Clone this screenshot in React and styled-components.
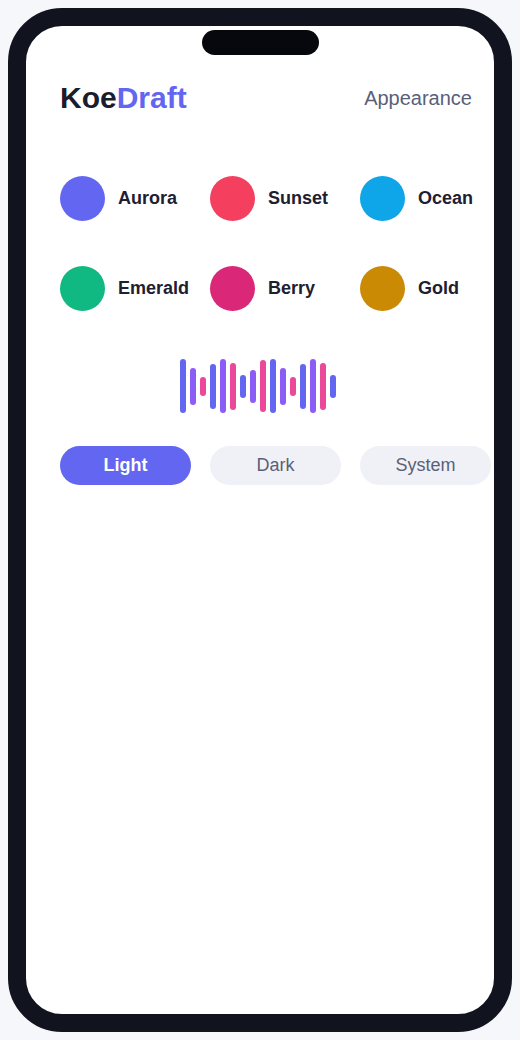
import styled, { createGlobalStyle } from "styled-components";

const GlobalStyle = createGlobalStyle`
  html, body {
    margin: 0;
    padding: 0;
    background: #f6f7fb;
    font-family: "Liberation Sans", Arial, sans-serif;
  }
`;

const Page = styled.div`
  padding: 8px;
`;

const Phone = styled.div`
  position: relative;
  width: 468px;
  height: 988px;
  border: 18px solid #11131f;
  border-radius: 54px;
  background: #ffffff;
  overflow: hidden;
`;

const Notch = styled.div`
  position: absolute;
  top: 4px;
  left: 176px;
  width: 117px;
  height: 25px;
  border-radius: 13px;
  background: #07080d;
`;

const Screen = styled.div`
  padding: 57px 22px 0 34px;
  display: flex;
  flex-direction: column;
`;

const Header = styled.header`
  display: flex;
  align-items: center;
  justify-content: space-between;
  height: 30px;
`;

const Logo = styled.h1`
  margin: 0;
  font-size: 30px;
  line-height: 1;
  font-weight: 700;
  color: #1b1c2c;

  span {
    color: #6366f1;
  }
`;

const Title = styled.span`
  font-size: 20px;
  line-height: 1;
  color: #5b5f79;
`;

const Grid = styled.div`
  display: grid;
  grid-template-columns: repeat(3, 131px);
  column-gap: 19px;
  row-gap: 45px;
  margin-top: 63px;
`;

const Swatch = styled.div`
  display: flex;
  align-items: center;
  gap: 13px;
  height: 45px;
`;

const Dot = styled.div`
  flex: none;
  width: 45px;
  height: 45px;
  border-radius: 50%;
  background: ${(p) => p.color};
`;

const Label = styled.span`
  font-size: 18px;
  font-weight: 700;
  color: #1e2031;
  white-space: nowrap;
`;

const Wave = styled.div`
  width: 396px;
  height: 54px;
  margin-top: 48px;
  display: flex;
  align-items: center;
  justify-content: center;
  gap: 4px;
`;

const Bar = styled.div`
  width: 6px;
  border-radius: 3px;
  background: ${(p) => p.color};
`;

const Modes = styled.div`
  display: grid;
  grid-template-columns: repeat(3, 131px);
  column-gap: 19px;
  margin-top: 33px;
`;

const ModeButton = styled.button`
  height: 39px;
  border: none;
  border-radius: 20px;
  font-family: inherit;
  font-size: 18px;
  font-weight: ${(p) => (p.$active ? 700 : 400)};
  color: ${(p) => (p.$active ? "#ffffff" : "#5b5f79")};
  background: ${(p) => (p.$active ? "#6366f1" : "#f0f1f6")};
  cursor: pointer;
`;

const swatches = [
  { name: "Aurora", color: "#6366f1" },
  { name: "Sunset", color: "#f43f5e" },
  { name: "Ocean", color: "#0ea5e9" },
  { name: "Emerald", color: "#10b981" },
  { name: "Berry", color: "#db2777" },
  { name: "Gold", color: "#ca8a04" },
];

const barColors = ["#6366f1", "#8b5cf6", "#ec4899"];
const barHeights = [54, 37, 19, 45, 54, 47, 23, 33, 52, 54, 37, 19, 45, 54, 47, 23];

export default function App() {
  return (
    <Page>
      <GlobalStyle />
      <Phone>
        <Notch />
        <Screen>
          <Header>
            <Logo>
              Koe<span>Draft</span>
            </Logo>
            <Title>Appearance</Title>
          </Header>

          <Grid>
            {swatches.map((s) => (
              <Swatch key={s.name}>
                <Dot color={s.color} />
                <Label>{s.name}</Label>
              </Swatch>
            ))}
          </Grid>

          <Wave>
            {barHeights.map((h, i) => (
              <Bar key={i} color={barColors[i % 3]} style={{ height: h }} />
            ))}
          </Wave>

          <Modes>
            <ModeButton $active>Light</ModeButton>
            <ModeButton>Dark</ModeButton>
            <ModeButton>System</ModeButton>
          </Modes>
        </Screen>
      </Phone>
    </Page>
  );
}
